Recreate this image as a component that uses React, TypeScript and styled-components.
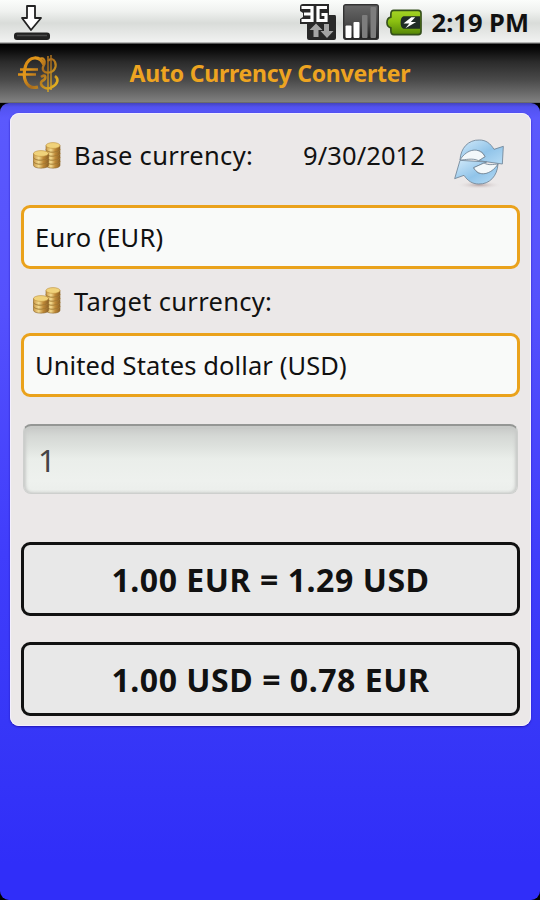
import React from "react";
import styled, { createGlobalStyle } from "styled-components";

const Global = createGlobalStyle`
  * { box-sizing: border-box; }
  body { margin: 0; background: #000; }
  svg { display: block; flex: none; }
`;

const Screen = styled.div`
  width: 540px;
  height: 900px;
  display: flex;
  flex-direction: column;
  overflow: hidden;
  background: #000;
  font-family: "Noto Sans", "Open Sans", sans-serif;
  color: #111;
`;

const StatusBar = styled.header`
  height: 44px;
  flex: none;
  display: flex;
  align-items: center;
  padding: 0 11px 0 13px;
  background: linear-gradient(#fbfdfb 0, #f0f2f0 11px, #d9dcd9 23px, #e3e5e3 31px, #f1f2f1 42px, #777 43px, #333 44px);
`;

const StatusIcons = styled.div`
  display: flex;
  align-items: center;
  margin-left: auto;
  gap: 7px;
`;

const Line = styled.span<{ $size: number; $spacing?: number; $bold?: boolean; $color?: string }>`
  font-size: ${(p) => p.$size}px;
  line-height: 1.2;
  letter-spacing: ${(p) => p.$spacing ?? 0}px;
  font-weight: ${(p) => (p.$bold ? 700 : 400)};
  color: ${(p) => p.$color ?? "inherit"};
  white-space: nowrap;
`;

const Clock = styled(Line)`
  margin-left: 10px;
`;

const TitleBar = styled.div`
  height: 59px;
  flex: none;
  display: grid;
  grid-template-columns: 112px 1fr 112px;
  align-items: center;
  justify-items: center;
  background: linear-gradient(#000 0, #0b0b0b 6px, #2b2b2b 18px, #4a4a4a 36px, #808080 58px, #555 59px);
`;

const Logo = styled.div`
  justify-self: start;
  padding-left: 17px;
`;

const Body = styled.main`
  flex: 1;
  padding: 10px 9px 0 10px;
  border-radius: 9px;
  background: linear-gradient(#4343bd 0, #5252f0 4px, #5b59fd 15px, #5551fd 200px, #403dfb 450px, #3737f7 620px, #302ef9 760px, #302ef9 100%);
`;

const Panel = styled.section`
  height: 613px;
  display: flex;
  flex-direction: column;
  padding: 0 11px;
  border-radius: 9px;
  background: #ebe8e8;
  box-shadow: inset 0 0 0 1px #f3efff, 0 1px 2px #2114b6;
`;

const LabelRow = styled.div<{ $height: number; $lift?: number }>`
  height: ${(p) => p.$height}px;
  flex: none;
  display: flex;
  align-items: center;
  padding: 0 14px ${(p) => p.$lift ?? 0}px 11px;
  gap: 11px;
`;

const DateText = styled(Line)`
  margin-left: auto;
  margin-right: 16px;
`;

const RefreshButton = styled.div`
  flex: none;
  padding-top: 15px;
`;

const Select = styled.div`
  height: 64px;
  flex: none;
  display: flex;
  align-items: center;
  padding: 0 11px;
  border: 3px solid #eaa21c;
  border-radius: 9px;
  background: #f9faf9;
`;

const Amount = styled.div`
  height: 70px;
  flex: none;
  margin: 27px 2px 48px;
  display: flex;
  align-items: center;
  padding: 3px 14px 0;
  border-radius: 8px;
  border: 1px solid #cdcfcd;
  border-top: 2px solid #949694;
  background: linear-gradient(#c5c7c5 0, #d5d8d5 10px, #dde1dd 20px, #eaeeea 33px, #eef1ee 55px, #ebeeeb 100%);
  box-shadow: inset 2px 0 3px #c9cbc9, inset -2px 0 3px #c9cbc9;
`;

const Result = styled.div`
  height: 74px;
  flex: none;
  display: flex;
  align-items: center;
  justify-content: center;
  padding-top: 2px;
  border: 3px solid #111;
  border-radius: 9px;
  background: #e8e8e8;
  & + & { margin-top: 26px; }
`;

const DownloadIcon = () => (
  <svg width="38" height="42" viewBox="0 0 38 42">
    <path d="M14 5h8v12h6l-10 12-9-12h5z" fill="#fff" stroke="#222" strokeWidth="1.8" strokeLinejoin="round" />
    <rect x="1" y="31.500" width="36" height="7.500" rx="3" fill="#222" />
    <path d="M4 34.500h30" stroke="#4a4a4a" strokeWidth="1.5" />
  </svg>
);

const NetworkIcon = () => (
  <svg width="36" height="36" viewBox="0 0 36 36">
    <path d="M3 0H29V11H35Q36 11 36 13V34Q36 36 34 36H9Q7 36 7 34V20H0V15L3 13V9L0 7V3Q0 0 3 0z" fill="#282828" />
    <path d="M1.500 3.500H12V16.500H1.500M4 10H12" fill="none" stroke="#fff" strokeWidth="3.200" />
    <path d="M27 3.500H18V16.500H26V10.500H21.500" fill="none" stroke="#fff" strokeWidth="3.200" />
    <path d="M13.500 33V26H9.500L16 19.500 22.500 26H18.500V33zM24 20V27H20.500L27 34 33.500 27H29V20z" fill="#a4a4a4" />
  </svg>
);

const SignalIcon = () => (
  <svg width="36" height="36" viewBox="0 0 36 36">
    <defs>
      <linearGradient id="signalBack" x2="0" y2="1">
        <stop stopColor="#686868" />
        <stop offset=".5" stopColor="#4d4d4d" />
        <stop offset="1" stopColor="#1c1c1c" />
      </linearGradient>
    </defs>
    <rect x=".7" y=".7" width="34.600" height="34.600" rx="2" fill="url(#signalBack)" stroke="#333" strokeWidth="1.400" />
    <rect x="2.500" y="21.500" width="6" height="12.500" rx="1" fill="#fff" />
    <rect x="10.500" y="18" width="6" height="16" rx="1" fill="#fff" />
    <rect x="19" y="11" width="5.500" height="23" rx="1" fill="#7d7d7d" />
    <rect x="27.500" y="3" width="5.500" height="31" rx="1" fill="#7d7d7d" />
  </svg>
);

const BatteryIcon = () => (
  <svg width="36" height="27" viewBox="0 0 37 27">
    <defs>
      <linearGradient id="batteryFill" x2="0" y2="1">
        <stop stopColor="#a5d426" />
        <stop offset=".45" stopColor="#8bc011" />
        <stop offset="1" stopColor="#548507" />
      </linearGradient>
    </defs>
    <path d="M8 1H33Q36 1 36 4V23Q36 26 33 26H8Q5 26 5 22V19Q1 18 1 13.500T5 8V5Q5 1 8 1z" fill="url(#batteryFill)" stroke="#35501a" strokeWidth="1.700" />
    <path d="M18 7H35V20H18Q15 19 15 13.500T18 7z" fill="#202c26" />
    <path d="M26 8L18 14.500H24L20 19.500 31 13H25.500L30 8z" fill="#fff" />
  </svg>
);

const CurrencyLogo = () => (
  <svg width="44" height="42" viewBox="0 0 44 42">
    <defs>
      <linearGradient id="logoGold" gradientUnits="userSpaceOnUse" x1="2" y1="4" x2="42" y2="34">
        <stop stopColor="#c97a0c" />
        <stop offset=".3" stopColor="#e4991c" />
        <stop offset=".55" stopColor="#a96c1c" />
        <stop offset="1" stopColor="#efbd20" />
      </linearGradient>
    </defs>
    <g fill="none" stroke="url(#logoGold)">
      <path d="M27 12C23 2 12 3 8.500 13C5 25 9 37 21 34" strokeWidth="3.200" />
      <path d="M3 16.500H21M1 21.500H19" strokeWidth="2.700" />
      <path d="M22 7C26 3 29 7 27 12C24 17 27 20 32 19.500C37 19 40 14 38 9C37 6 34 5 31 8" strokeWidth="2.200" />
      <path d="M24 24C29 20 30 26 25 28C21 32 29 38 35 34C41 31 42 26 38 23" strokeWidth="2.600" />
      <path d="M31 3V39M34 2V37" strokeWidth="1.400" />
    </g>
  </svg>
);

const CoinStack = ({ x, y, levels, width }: { x: number; y: number; levels: number; width: number }) => (
  <g>
    {Array.from({ length: levels }, (_, i) => {
      const cy = y + (levels - 1 - i) * 4;
      return (
        <g key={i}>
          <path
            d={`M${x} ${cy}v3.800c0 3.800 ${width} 3.800 ${width} 0v-3.800z`}
            fill="url(#coinEdge)"
            stroke="#8a6428"
            strokeWidth=".6"
          />
          <ellipse cx={x + width / 2} cy={cy} rx={width / 2} ry="2.900" fill="#f0d27a" stroke="#bd913d" strokeWidth=".6" />
        </g>
      );
    })}
  </g>
);

const CoinsIcon = () => (
  <svg width="31" height="30" viewBox="0 0 31 30">
    <defs>
      <linearGradient id="coinEdge">
        <stop stopColor="#cb9948" />
        <stop offset=".35" stopColor="#f3da8e" />
        <stop offset=".65" stopColor="#bf8937" />
        <stop offset="1" stopColor="#8f6226" />
      </linearGradient>
    </defs>
    <CoinStack x={14} y={4.5} levels={5} width={14} />
    <CoinStack x={1.5} y={12.500} levels={3} width={15} />
  </svg>
);

const RefreshIcon = () => (
  <svg width="54" height="54" viewBox="488 76 162 162">
    <defs>
      <linearGradient id="refreshBlue" x2="1" y2="1">
        <stop stopColor="#d2eafa" />
        <stop offset=".55" stopColor="#91c4e9" />
        <stop offset="1" stopColor="#b7dcf5" />
      </linearGradient>
      <radialGradient id="refreshShadow">
        <stop stopColor="#b8a5a5" />
        <stop offset="1" stopColor="#e9e7e7" stopOpacity="0" />
      </radialGradient>
    </defs>
    <ellipse cx="570" cy="223" rx="67" ry="12" fill="url(#refreshShadow)" />
    <g stroke="#6d8294" strokeWidth="2.500" strokeLinejoin="round">
      <path d="M512 148C514 112 537 87 570 88C590 88 603 98 614 116L642 107L639 160L568 150L587 138C574 108 539 116 512 148z" fill="url(#refreshBlue)" />
      <path d="M512 148C533 113 571 108 587 138L568 150C548 141 528 148 512 148z" fill="#f3f8fa" />
      <path d="M626 160C624 196 601 221 568 220C548 220 535 210 524 194L496 204L512 149L592 154L553 171C566 200 600 192 626 160z" fill="url(#refreshBlue)" />
      <path d="M626 160C605 193 568 200 553 171L584 157C598 165 611 161 626 160z" fill="#f3f8fa" />
    </g>
  </svg>
);

export default function App() {
  return (
    <Screen>
      <Global />
      <StatusBar>
        <DownloadIcon />
        <StatusIcons>
          <NetworkIcon />
          <SignalIcon />
          <BatteryIcon />
        </StatusIcons>
        <Clock $size={25.5} $bold>2:19 PM</Clock>
      </StatusBar>
      <TitleBar>
        <Logo><CurrencyLogo /></Logo>
        <Line $size={23} $spacing={-0.22} $bold $color="#eda421">Auto Currency Converter</Line>
      </TitleBar>
      <Body>
        <Panel>
          <LabelRow $height={92} $lift={7}>
            <CoinsIcon />
            <Line $size={25.5} $spacing={0.3}>Base currency:</Line>
            <DateText $size={25.5} $spacing={0.1}>9/30/2012</DateText>
            <RefreshButton><RefreshIcon /></RefreshButton>
          </LabelRow>
          <Select><Line $size={25.5} $spacing={0.25}>Euro (EUR)</Line></Select>
          <LabelRow $height={64}>
            <CoinsIcon />
            <Line $size={25.5} $spacing={0.3}>Target currency:</Line>
          </LabelRow>
          <Select><Line $size={25.5} $spacing={0.1}>United States dollar (USD)</Line></Select>
          <Amount><Line $size={31} $color="#444">1</Line></Amount>
          <Result><Line $size={32} $spacing={0.55} $bold>1.00 EUR = 1.29 USD</Line></Result>
          <Result><Line $size={32} $spacing={0.55} $bold>1.00 USD = 0.78 EUR</Line></Result>
        </Panel>
      </Body>
    </Screen>
  );
}
